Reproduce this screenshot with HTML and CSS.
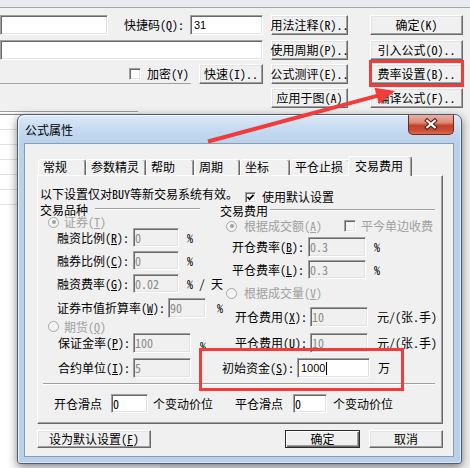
FILE: index.html
```html
<!DOCTYPE html>
<html lang="zh-CN">
<head>
<meta charset="utf-8">
<title>公式属性</title>
<link rel="stylesheet" href="styles.css">
</head>
<body>
<div class="topstrip"></div>
<div class="form">
  <div class="fleft">
    <div class="frow">
      <div class="sunken edit e-name"></div>
      <span class="qlabel">快捷码(Q):</span>
      <div class="sunken edit e-code">31</div>
    </div>
    <div class="frow frow2">
      <div class="sunken edit e-desc"></div>
    </div>
    <div class="frow frow3">
      <div class="chkarea"><span class="sunken cbox"></span><span class="cbtext">加密(Y)</span></div>
      <button class="btn b-quick">快速(I)..</button>
    </div>
  </div>
  <div class="bcol bcol1">
    <button class="btn">用法注释(R)..</button>
    <button class="btn">使用周期(P)..</button>
    <button class="btn">公式测评(E)..</button>
    <button class="btn">应用于图(A)</button>
  </div>
  <div class="bcol bcol2">
    <button class="btn">确定(K)</button>
    <button class="btn">引入公式(O)..</button>
    <button class="btn">费率设置(B)..</button>
    <button class="btn">编译公式(F)..</button>
  </div>
</div>
<div class="lower">
  <div class="rule"></div>
  <div class="listbox">
    <div class="li"></div><div class="li"></div><div class="li"></div>
    <div class="li"></div><div class="li"></div><div class="li"></div>
  </div>
</div>

<div class="dialog">
  <div class="titlebar">
    <span class="title">公式属性</span>
    <span class="close"><svg width="46" height="19" viewBox="0 0 46 19"><path d="M19 5.5 L27 12.5 M27 5.5 L19 12.5" stroke="#4a1a12" stroke-width="4.2" stroke-linecap="square" fill="none"/><path d="M19 5.5 L27 12.5 M27 5.5 L19 12.5" stroke="#fff" stroke-width="2.2" stroke-linecap="square" fill="none"/></svg></span>
  </div>
  <div class="client">
    <div class="tabs">
      <span class="tab t48">常规</span>
      <span class="tab t60">参数精灵</span>
      <span class="tab t48">帮助</span>
      <span class="tab t46">周期</span>
      <span class="tab t50">坐标</span>
      <span class="tab t60">平仓止损</span>
      <span class="tab active">交易费用</span>
    </div>
    <div class="panel">
      <div class="hdr">
        <span class="note">以下设置仅对BUY等新交易系统有效。</span>
        <span class="hdr-chk"><span class="sunken cbox"><svg width="9" height="9" viewBox="0 0 9 9"><path d="M1.5 4 L3.5 6.2 L7.6 1.8" stroke="#000" stroke-width="1.7" fill="none"/></svg></span><span class="ml6">使用默认设置</span></span>
      </div>
      <div class="groups">
        <div class="grp grp-l">
          <div class="gtitle"><span class="gt-l">交易品种</span><span class="gline gl-l"></span></div>
          <div class="r h12"><span class="radio on ml8"></span><span class="dis ml5 lh12">证券(<u>T</u>)</span></div>
          <div class="r h19"><span class="lab lab-a">融资比例(<u>R</u>):</span><span class="sunken in w46">0</span><span class="ml8">%</span></div>
          <div class="r h19 mt4"><span class="lab lab-a">融券比例(<u>C</u>):</span><span class="sunken in w46">0</span><span class="ml8">%</span></div>
          <div class="r h19 mt4"><span class="lab lab-a">融资费率(<u>G</u>):</span><span class="sunken in w46">0.02</span><span class="ml8">% / 天</span></div>
          <div class="r h20 mt5"><span class="lab lab-b">证券市值折算率(<u>W</u>):</span><span class="sunken in w38">90</span><span class="ml11">%</span></div>
          <div class="r h13 mt2"><span class="radio ml8"></span><span class="dis ml5 lh12">期货(<u>Q</u>)</span></div>
          <div class="r h20"><span class="lab lab-c">保证金率(<u>P</u>):</span><span class="sunken in w58">100</span><span class="ml9 low">%</span></div>
          <div class="r h20 mt5"><span class="lab lab-c">合约单位(<u>I</u>):</span><span class="sunken in w58">5</span></div>
        </div>
        <div class="grp grp-r">
          <div class="gtitle mt1"><span class="gt-r">交易费用</span><span class="gline gl-r"></span></div>
          <div class="r h14 mt2"><span class="radio on ml6"></span><span class="dis ml7 w100">根据成交额(<u>A</u>)</span><span class="sunken cbox cbox-dis"></span><span class="dis ml5">平今单边收费</span></div>
          <div class="r h20 mt4"><span class="lab lab-d">开仓费率(<u>B</u>):</span><span class="sunken in w58">0.3</span><span class="ml8">%</span></div>
          <div class="r h19 mt3"><span class="lab lab-d">平仓费率(<u>L</u>):</span><span class="sunken in w58">0.3</span><span class="ml8">%</span></div>
          <div class="r h14 mt7"><span class="radio ml6"></span><span class="dis ml7">根据成交量(<u>V</u>)</span></div>
          <div class="r h20 mt7"><span class="lab lab-e">开仓费用(<u>X</u>):</span><span class="sunken in w58">10</span><span class="ml9">元/(张.手)</span></div>
          <div class="r h20 mt6"><span class="lab lab-e">平仓费用(<u>U</u>):</span><span class="sunken in w58">10</span><span class="ml9">元/(张.手)</span></div>
          <div class="r h20 mt5"><span class="lab lab-f">初始资金(<u>S</u>):</span><span class="sunken in en w73"><span class="sans">1000</span><span class="caret"></span></span><span class="ml8">万</span></div>
        </div>
      </div>
      <div class="sep"></div>
      <div class="slip">
        <div class="sg sg1"><span class="sl1">开仓滑点</span><span class="sunken in en w37">0</span><span class="ml5">个变动价位</span></div>
        <div class="sg"><span class="sl2">平仓滑点</span><span class="sunken in en w34">0</span><span class="ml6">个变动价位</span></div>
      </div>
    </div>
    <div class="dbtns">
      <button class="btn b-def">设为默认设置(<u>F</u>)</button>
      <button class="btn b-ok">确定</button>
      <button class="btn b-cancel">取消</button>
    </div>
  </div>
</div>

<div class="hl hl-top"></div>
<div class="hl hl-cap"></div>
<svg class="arrow" width="470" height="468" viewBox="0 0 470 468">
  <line x1="208" y1="141.5" x2="378" y2="95.6" stroke="#f23b3b" stroke-width="4"/>
  <polygon points="395,91 378.9,104.1 374.5,87.7" fill="#f23b3b"/>
</svg>
</body>
</html>
```

FILE: styles.css
```css
* { box-sizing: border-box; }
html, body { margin: 0; padding: 0; }
body {
  position: relative;
  width: 470px;
  height: 468px;
  overflow: hidden;
  background: #f0f0f0;
  color: #000;
  font-family: "Noto Sans Mono CJK SC", "Noto Sans CJK SC", sans-serif;
  font-size: 12px;
  line-height: 14px;
}
u { text-decoration: underline; text-underline-offset: 1px; }

/* background window */
.topstrip { height: 8px; background: #e8e9f1; border-bottom: 1px solid #a3a6ae; }
.form { display: flex; margin-top: 7px; height: 93px; }
.fleft { width: 263px; display: flex; flex-direction: column; }
.frow { display: flex; align-items: center; height: 20px; }
.frow2 { margin-top: 5px; }
.frow3 { margin-top: 4px; }

.sunken {
  border: 1px solid;
  border-color: #a0a0a0 #fff #fff #a0a0a0;
  box-shadow: inset 1px 1px #696969, inset -1px -1px #e3e3e3;
  background: #fff;
}
.edit { height: 20px; }
.e-name { width: 108px; }
.qlabel { margin-left: 16px; width: 66px; white-space: nowrap; }
.e-code { width: 73px; font: 11px/18px "Liberation Sans", sans-serif; padding-left: 3px; }
.e-desc { width: 263px; }

.chkarea {
  width: 193px; height: 20px;
  display: flex; align-items: center;
  padding-left: 129px;
  border-bottom: 1px solid #a0a0a0;
}
.cbox { width: 12px; height: 12px; flex: none; display: flex; align-items: center; justify-content: center; }
.cbox-dis { background: #f4f4f4; }
.cbtext { margin-left: 6px; white-space: nowrap; }
.b-quick { width: 64px; margin-left: 8px; flex: none; }

.bcol { display: flex; flex-direction: column; gap: 4px; }
.bcol1 { width: 77px; margin-left: 8px; }
.bcol2 { width: 93px; margin-left: 22px; }
.bcol .btn:first-child { margin-bottom: 1px; }

.btn {
  font: inherit;
  color: #000;
  height: 20px;
  padding: 0;
  background: #f0f0f0;
  border: 1px solid;
  border-color: #fff #696969 #696969 #fff;
  box-shadow: inset -1px -1px #a0a0a0, inset 1px 1px #e3e3e3;
  border-radius: 0;
  display: flex; align-items: center; justify-content: center;
  white-space: nowrap;
  overflow: visible;
}

.lower { margin-top: 3px; }
.rule { width: 138px; height: 2px; border-top: 1px solid #a0a0a0; border-bottom: 1px solid #fff; }
.listbox { width: 160px; margin-top: 1px; border-top: 1px solid #828790; background: #fff; height: 360px; }
.li { height: 15px; border-bottom: 1px solid #e2e2e2; }

/* dialog */
.dialog {
  position: absolute;
  left: 17px; top: 114px;
  width: 445px; height: 350px;
  display: flex; flex-direction: column;
  padding: 0 7px 6px 6px;
  border: 1px solid #4e5d72;
  border-radius: 7px 7px 3px 3px;
  background: linear-gradient(180deg, #dce9f7 0, #c6dbf1 14px, #b9d1ea 28px, #b9d1ea 100%);
  box-shadow: 0 3px 10px rgba(0,0,0,.5), inset 1px 1px rgba(255,255,255,.7), inset -1px -1px rgba(255,255,255,.5);
}
.titlebar { height: 28px; flex: none; display: flex; justify-content: space-between; align-items: flex-start; }
.title { padding: 8px 0 0 1px; font-family: "Noto Sans CJK SC", sans-serif; }
.close {
  width: 46px; height: 20px;
  border: 1px solid #7a2617; border-top: 0;
  border-radius: 0 0 5px 5px;
  background: linear-gradient(180deg, #eab0a2 0, #dc8a77 40%, #c3432c 55%, #c94d35 80%, #d86a52 100%);
  display: flex;
}
.client {
  flex: 1;
  background: #f0f0f0;
  border: 1px solid #8a9cb4;
  padding: 12px 0 0 12px;
  display: flex; flex-direction: column;
}

.tabs { display: flex; align-items: flex-end; height: 19px; padding-left: 1px; position: relative; z-index: 1; }
.tab {
  height: 16px;
  padding: 0 0 0 4px;
  border: 1px solid;
  border-bottom: 0;
  border-color: #fff #696969 transparent #fff;
  box-shadow: inset -1px 0 #a0a0a0;
  border-radius: 3px 3px 0 0;
  background: #f0f0f0;
  white-space: nowrap;
  flex: none;
}
.t46 { width: 46px; }
.t48 { width: 48px; }
.t50 { width: 50px; }
.t60 { width: 60px; }
.tab.active { height: 20px; width: 64px; margin: 0 -2px -1px; padding: 2px 0 0 6px; }

.panel {
  width: 406px; height: 249px; flex: none;
  border: 1px solid;
  border-color: #fff #696969 #696969 #fff;
  box-shadow: inset -1px -1px #a0a0a0;
  padding: 11px 0 0 2px;
}
.hdr { display: flex; height: 15px; }
.note { width: 205px; white-space: nowrap; flex: none; line-height: 13px; }
.hdr-chk { display: flex; align-items: center; margin-top: 3px; height: 14px; }
.hdr-chk .cbox { width: 11px; height: 11px; }

.groups { display: flex; }
.grp { display: flex; flex-direction: column; }
.grp-l { width: 180px; }
.grp-r { width: 216px; }
.gtitle { display: flex; align-items: center; height: 14px; }
.gt-l { width: 55px; line-height: 13px; }
.gt-r { width: 50px; line-height: 13px; }
.gline { height: 2px; border-top: 1px solid #a0a0a0; border-bottom: 1px solid #fff; }
.gl-l { width: 105px; }
.gl-r { width: 165px; }

.r { display: flex; align-items: center; white-space: nowrap; }
.h12 { height: 12px; }
.h13 { height: 13px; }
.h14 { height: 14px; }
.h19 { height: 19px; }
.h20 { height: 20px; }
.mt1 { margin-top: 1px; }
.mt2 { margin-top: 2px; }
.mt3 { margin-top: 3px; }
.mt4 { margin-top: 4px; }
.mt5 { margin-top: 5px; }
.mt6 { margin-top: 6px; }
.mt7 { margin-top: 7px; }
.ml5 { margin-left: 5px; }
.ml6 { margin-left: 6px; }
.ml7 { margin-left: 7px; }
.ml8 { margin-left: 8px; }
.ml9 { margin-left: 9px; }
.ml11 { margin-left: 11px; }
.lh12 { line-height: 12px; }
.w100 { width: 100px; flex: none; }
.low { position: relative; top: 3px; }

.lab { flex: none; white-space: nowrap; }
.lab-a { margin-left: 17px; width: 76px; }
.lab-b { margin-left: 17px; width: 111px; }
.lab-c { margin-left: 18px; width: 75px; }
.lab-d { margin-left: 12px; width: 76px; }
.lab-e { margin-left: 15px; width: 75px; }
.lab-f { margin-left: 2px; width: 75px; }

.in {
  height: 100%;
  flex: none;
  display: flex; align-items: center;
  padding-left: 1px;
  background: #f0f0f0;
  color: #8a8a8a;
}
.in.en { background: #fff; color: #000; }
.w34 { width: 34px; }
.w37 { width: 37px; }
.w38 { width: 38px; }
.w46 { width: 46px; }
.w58 { width: 58px; }
.w73 { width: 73px; }
.sans { font: 11px/13px "Liberation Sans", sans-serif; margin-left: 2px; }
.caret { width: 1px; height: 13px; background: #000; margin-left: 1px; }

.radio {
  width: 11px; height: 11px; flex: none;
  border-radius: 50%;
  border: 1px solid #a6a6a6;
  background: #f4f4f4;
  display: flex; align-items: center; justify-content: center;
}
.radio.on::after { content: ""; width: 4px; height: 4px; border-radius: 50%; background: #a0a0a0; }
.dis { color: #a0a0a0; }

.sep { margin: 5px 0 0 3px; width: 392px; height: 2px; border-top: 1px solid #a0a0a0; border-bottom: 1px solid #fff; }
.slip { display: flex; align-items: center; height: 19px; margin-top: 9px; }
.sg { display: flex; align-items: center; height: 19px; white-space: nowrap; }
.sg1 { margin-left: 14px; width: 181px; flex: none; }
.sl1 { width: 57px; flex: none; }
.sl2 { width: 58px; flex: none; }

.dbtns { display: flex; margin-top: 6px; height: 18px; }
.dbtns .btn { height: 18px; flex: none; }
.b-def { width: 114px; }
.b-ok {
  width: 75px; margin-left: 134px;
  border-color: #2b2b2b;
  box-shadow: inset 1px 1px #fff, inset -1px -1px #696969, inset -2px -2px #a0a0a0;
}
.b-cancel { width: 74px; margin-left: 9px; }

/* annotations */
.hl { position: absolute; border: 3px solid #f23b3b; pointer-events: none; }
.hl-top { left: 369px; top: 60px; width: 95px; height: 27px; }
.hl-cap { left: 199px; top: 348px; width: 205px; height: 43px; }
.arrow { position: absolute; left: 0; top: 0; pointer-events: none; }
```
